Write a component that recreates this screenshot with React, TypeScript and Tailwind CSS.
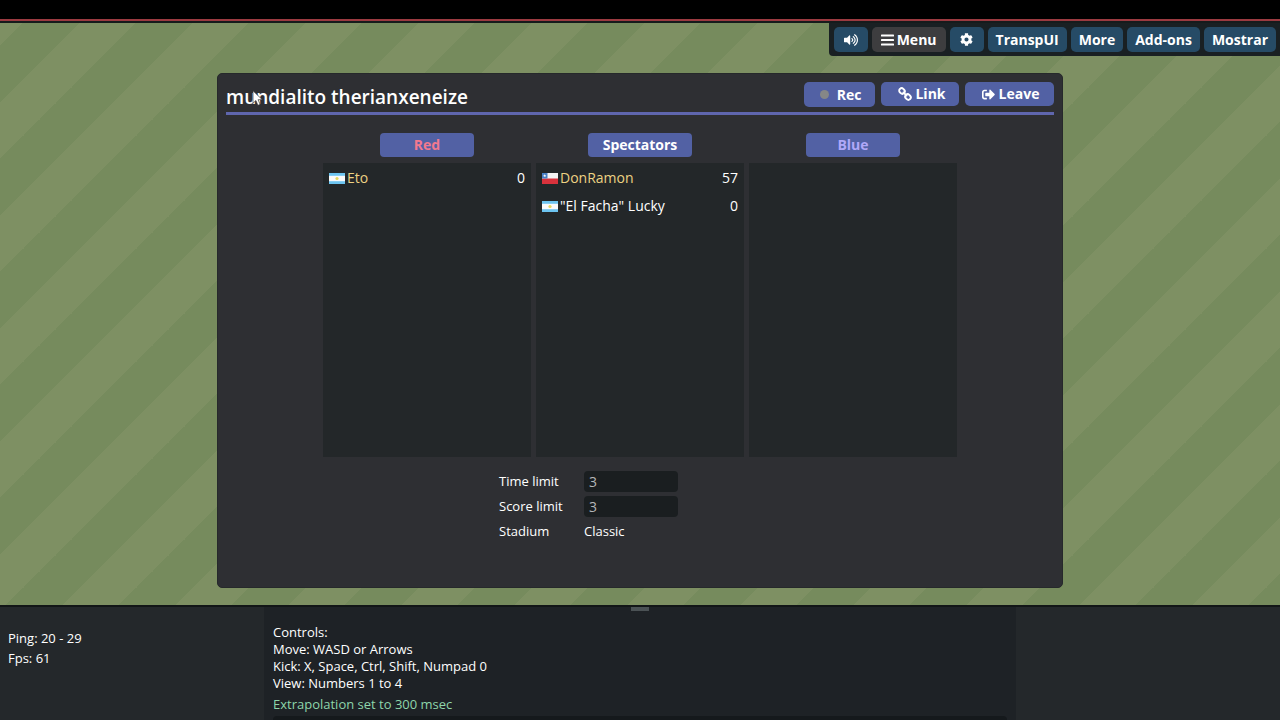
import type { ReactNode } from "react";
import { FaCog, FaSignOutAlt, FaVolumeUp } from "react-icons/fa";

type Country = "ar" | "cl";

interface Player {
  name: string;
  country: Country;
  ping: number;
  admin: boolean;
}

interface Team {
  title: string;
  buttonClass: string;
  players: Player[];
}

const teams: Team[] = [
  {
    title: "Red",
    buttonClass: "w-[94px] text-[#f2798f]",
    players: [{ name: "Eto", country: "ar", ping: 0, admin: true }],
  },
  {
    title: "Spectators",
    buttonClass: "w-[104px] text-white",
    players: [
      { name: "DonRamon", country: "cl", ping: 57, admin: true },
      { name: '"El Facha" Lucky', country: "ar", ping: 0, admin: false },
    ],
  },
  { title: "Blue", buttonClass: "w-[94px] text-[#b0a8f8]", players: [] },
];

function Flag({ country }: { country: Country }) {
  if (country === "cl") {
    return (
      <svg viewBox="0 0 16 11" className="h-[11px] w-4 shrink-0" aria-label="Chile">
        <rect width="16" height="11" fill="#f4f4f4" />
        <rect y="5.5" width="16" height="5.5" fill="#d8323c" />
        <rect width="5.5" height="5.5" fill="#4a80c4" />
        <path d="M2.7 1.2l.5 1.1h1.1l-.9.7.3 1.1-1-.6-1 .6.3-1.1-.9-.7h1.1z" fill="#fff" />
      </svg>
    );
  }
  return (
    <svg viewBox="0 0 16 11" className="h-[11px] w-4 shrink-0" aria-label="Argentina">
      <rect width="16" height="11" fill="#6cc4f0" />
      <rect y="2.8" width="16" height="5.4" fill="#fafafa" />
      <circle cx="8" cy="5.5" r="1.6" fill="#e6d860" />
    </svg>
  );
}

function MenuIcon() {
  return (
    <svg viewBox="0 0 13 12" className="h-3 w-[13px]" fill="currentColor" aria-hidden="true">
      <rect y="0.5" width="13" height="2" rx="0.6" />
      <rect y="5" width="13" height="2" rx="0.6" />
      <rect y="9.5" width="13" height="2" rx="0.6" />
    </svg>
  );
}

function ChainIcon() {
  return (
    <svg viewBox="0 0 14 14" className="size-[14px]" fill="none" stroke="currentColor" strokeWidth="1.9" strokeLinecap="round" aria-hidden="true">
      <rect x="1.1" y="1.6" width="5.8" height="4.8" rx="2.3" transform="rotate(45 4 4)" />
      <rect x="7.1" y="7.6" width="5.8" height="4.8" rx="2.3" transform="rotate(45 10 10)" />
      <path d="M5.4 5.4l3.2 3.2" />
    </svg>
  );
}

function ToolButton({ children, label, active = false }: { children: ReactNode; label?: string; active?: boolean }) {
  return (
    <button
      type="button"
      aria-label={label}
      className={`flex h-[25px] min-w-[34px] items-center justify-center gap-[3px] rounded-[5px] ${active ? "bg-[#3d3d3f] px-[9px]" : "bg-[#264b66] px-2"}`}
    >
      {children}
    </button>
  );
}

function RoomButton({ children, className }: { children: ReactNode; className: string }) {
  return (
    <button type="button" className={`flex items-center justify-center rounded-[5px] bg-[#5261a4] ${className}`}>
      {children}
    </button>
  );
}

function TeamColumn({ team }: { team: Team }) {
  return (
    <section className="flex w-[208px] flex-col items-center gap-[6px]">
      <button type="button" className={`h-6 rounded-[4px] bg-[#5261a4] text-sm font-bold leading-6 ${team.buttonClass}`}>
        {team.title}
      </button>
      <ul className="h-[294px] w-full bg-[#232729] px-[6px] pt-px">
        {team.players.map((p) => (
          <li key={p.name} className="flex h-7 items-center gap-[2px]">
            <Flag country={p.country} />
            <span className={`grow ${p.admin ? "text-[#edd283]" : "text-white"}`}>{p.name}</span>
            <span>{p.ping}</span>
          </li>
        ))}
      </ul>
    </section>
  );
}

function LimitRow({ id, label }: { id: string; label: string }) {
  return (
    <div className="flex h-[25px] items-center">
      <label htmlFor={id} className="w-[85px]">
        {label}
      </label>
      <input id={id} defaultValue="3" readOnly className="h-[21px] w-[94px] rounded-[4px] bg-[#1a1e20] px-[5px] text-sm text-[#b4b6b8] outline-none" />
    </div>
  );
}

function Pointer() {
  return (
    <svg viewBox="0 0 12 17" className="absolute left-[26px] top-2 h-[17px] w-3" aria-hidden="true">
      <path d="M1 0.8v12.4l2.9-2.7 2 4.8 2.2-.9-2-4.7h4.2z" fill="#fff" stroke="#35363a" strokeWidth="0.7" />
    </svg>
  );
}

export default function App() {
  return (
    <div className="flex h-screen flex-col overflow-hidden bg-black font-['Open_Sans','Noto_Sans',sans-serif] text-sm text-white">
      <div className="h-[19px] shrink-0" />
      <div className="h-[2px] shrink-0 bg-[#9b3a40]" />
      <div className="h-[2px] shrink-0 bg-[#161b1c]" />

      <main className="relative flex min-h-0 grow flex-col items-center bg-[#768b5d] bg-[linear-gradient(to_bottom_right,#768b5d_25%,#7e9063_25%,#7e9063_50%,#768b5d_50%,#768b5d_75%,#7e9063_75%)] bg-size-[113px_113px] bg-position-[23px_0px] pt-[50px]">
        <nav className="absolute right-0 top-0 flex gap-1 rounded-bl-[4px] bg-[#192023] pb-1 pl-[5px] pr-1 pt-1 font-bold">
          <ToolButton label="Sound">
            <FaVolumeUp className="size-[14px]" />
          </ToolButton>
          <ToolButton active>
            <MenuIcon />
            Menu
          </ToolButton>
          <ToolButton label="Settings">
            <FaCog className="size-[13px]" />
          </ToolButton>
          <ToolButton>TranspUI</ToolButton>
          <ToolButton>More</ToolButton>
          <ToolButton>Add-ons</ToolButton>
          <ToolButton>Mostrar</ToolButton>
        </nav>

        <div className="flex min-h-[515px] w-full max-w-[846px] flex-col rounded-[5px] border border-[#26292b] bg-[#2e2f33] px-2 pt-2">
          <header className="flex h-[33px] items-start border-b-3 border-[#5f66ae]">
            <h1 className="relative grow text-[19px] font-semibold leading-[30px]">
              mundialito therianxeneize
              <Pointer />
            </h1>
            <div className="flex items-start gap-[6px] font-bold">
              <RoomButton className="h-[25px] w-[71px] gap-2 pl-[2px]">
                <span className="size-[9px] rounded-full bg-[#858787]" />
                Rec
              </RoomButton>
              <RoomButton className="h-6 w-[78px] gap-[3px] pl-1">
                <ChainIcon />
                Link
              </RoomButton>
              <RoomButton className="h-6 w-[89px] gap-1 pl-[2px]">
                <FaSignOutAlt className="size-[13px]" />
                Leave
              </RoomButton>
            </div>
          </header>

          <div className="mt-[18px] flex justify-center gap-[5px]">
            {teams.map((team) => (
              <TeamColumn key={team.title} team={team} />
            ))}
          </div>

          <div className="mx-auto mt-3 w-[282px] text-[13px]">
            <LimitRow id="time-limit" label="Time limit" />
            <LimitRow id="score-limit" label="Score limit" />
            <div className="flex h-[25px] items-center">
              <span className="w-[85px]">Stadium</span>
              <span>Classic</span>
            </div>
          </div>
        </div>
      </main>

      <footer className="relative grid h-[115px] shrink-0 grid-cols-[1fr_752px_1fr] border-t-2 border-[#121617] bg-[#24282b] text-[13px]">
        <div className="pl-2 pt-[21px] leading-5">
          <p>Ping: 20 - 29</p>
          <p>Fps: 61</p>
        </div>
        <div className="flex flex-col bg-[#1e2226] px-[9px] pt-[17px]">
          <p className="leading-[17px]">Controls:</p>
          <p className="leading-[17px]">Move: WASD or Arrows</p>
          <p className="leading-[17px]">Kick: X, Space, Ctrl, Shift, Numpad 0</p>
          <p className="leading-[17px]">View: Numbers 1 to 4</p>
          <p className="leading-6 text-[#8ed6ab]">Extrapolation set to 300 msec</p>
          <input aria-label="Chat message" className="h-6 shrink-0 rounded-[4px] bg-[#15191c] outline-none" />
        </div>
        <div className="absolute inset-x-0 top-0 mx-auto h-1 w-[18px] bg-[#4b5255]" />
      </footer>
    </div>
  );
}
